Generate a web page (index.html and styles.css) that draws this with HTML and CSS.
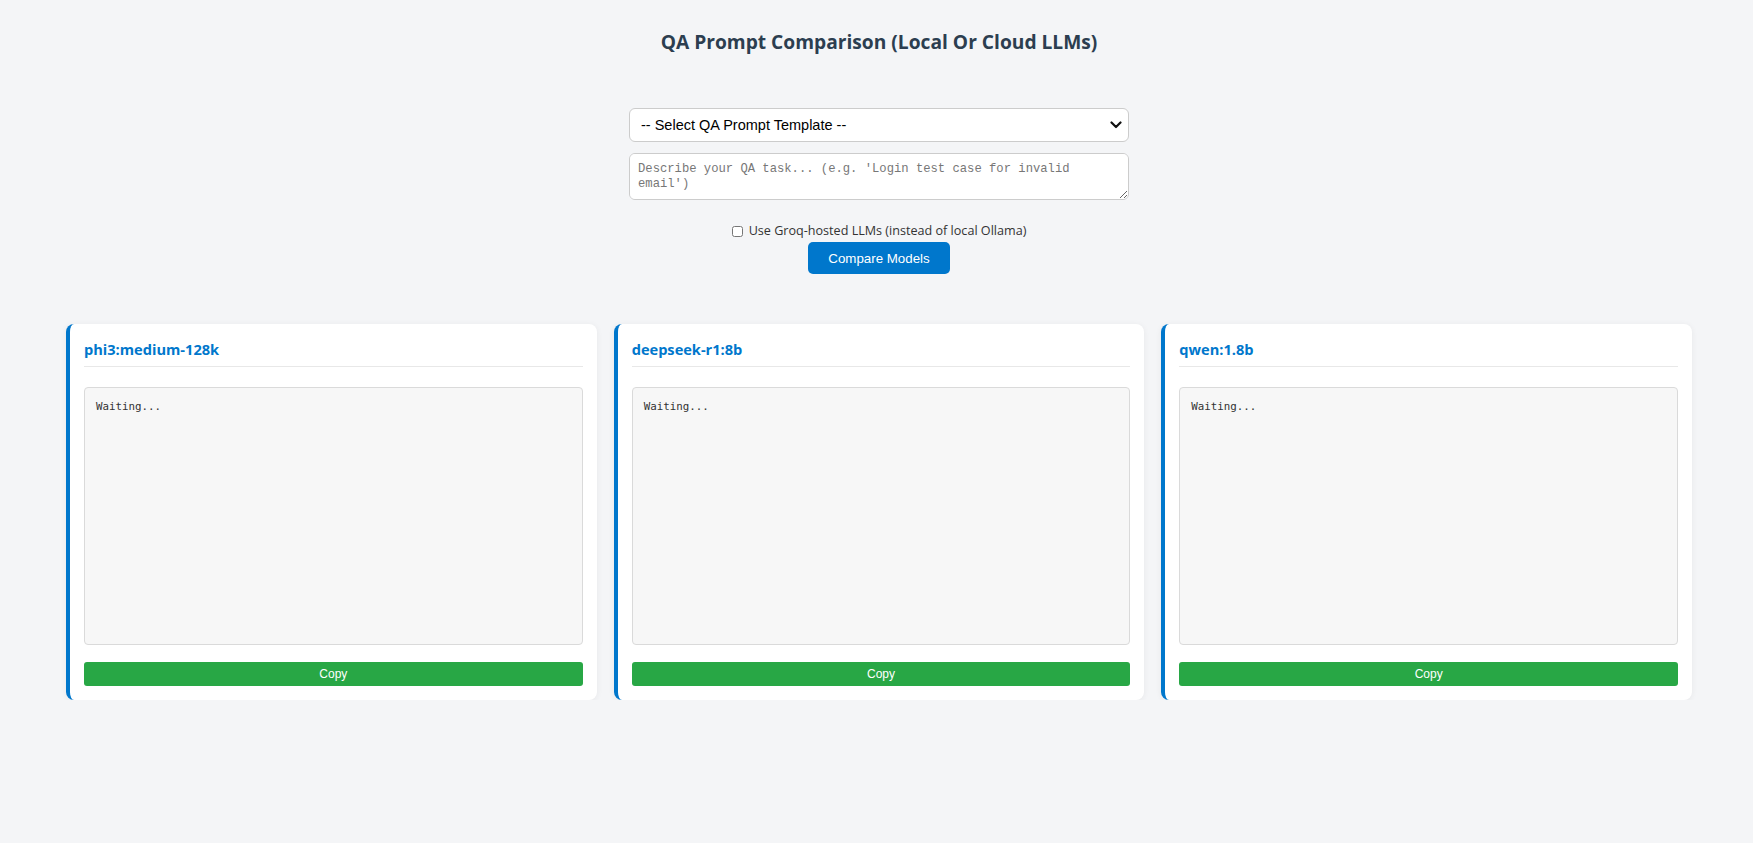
FILE: index.html
```html
<!DOCTYPE html>
<html lang="en">
<head>
<meta charset="utf-8">
<title>QA Prompt Comparison</title>
<link rel="stylesheet" href="styles.css">
</head>
<body>
  <h2 class="title">QA Prompt Comparison (Local Or Cloud LLMs)</h2>

  <div class="controls">
    <div class="select-wrap">
      <select class="template-select">
        <option>-- Select QA Prompt Template --</option>
      </select>
      <svg class="chevron" width="12" height="8" viewBox="0 0 12 8" aria-hidden="true">
        <path d="M1.5 1.5 L6 6 L10.5 1.5" fill="none" stroke="#111" stroke-width="2.2" stroke-linecap="round" stroke-linejoin="round"/>
      </svg>
    </div>
    <textarea class="task-input" rows="2" placeholder="Describe your QA task... (e.g. 'Login test case for invalid email')"></textarea>
    <label class="groq-toggle"><input type="checkbox" class="groq-check"> Use Groq-hosted LLMs (instead of local Ollama)</label>
    <button class="compare-btn">Compare Models</button>
  </div>

  <div class="results">
    <div class="card">
      <h3 class="card-title">phi3:medium-128k</h3>
      <pre class="output">Waiting...</pre>
      <button class="copy-btn">Copy</button>
    </div>
    <div class="card">
      <h3 class="card-title">deepseek-r1:8b</h3>
      <pre class="output">Waiting...</pre>
      <button class="copy-btn">Copy</button>
    </div>
    <div class="card">
      <h3 class="card-title">qwen:1.8b</h3>
      <pre class="output">Waiting...</pre>
      <button class="copy-btn">Copy</button>
    </div>
  </div>
</body>
</html>
```
FILE: styles.css
```css
html, body {
  margin: 0;
  background: #f4f5f7;
}

body {
  padding: 30px 61px 0 66px;
  font-family: "Open Sans", "Noto Sans", sans-serif;
  color: #333;
}

.title {
  margin: 0;
  text-align: center;
  font-size: 19.2px;
  line-height: 24px;
  font-weight: 700;
  color: #2c3e50;
}

.controls {
  display: flex;
  flex-direction: column;
  align-items: center;
  margin-top: 54px;
}

.select-wrap {
  position: relative;
  width: 500px;
}

.template-select {
  appearance: none;
  -webkit-appearance: none;
  display: block;
  width: 100%;
  height: 34px;
  box-sizing: border-box;
  padding: 0 30px 0 11px;
  border: 1px solid #ccc;
  border-radius: 6px;
  background: #fff;
  font-family: "Liberation Sans", Arial, sans-serif;
  font-size: 14.5px;
  color: #000;
}

.chevron {
  position: absolute;
  right: 7px;
  top: 13px;
  pointer-events: none;
}

.task-input {
  display: block;
  width: 500px;
  height: 47px;
  box-sizing: border-box;
  margin-top: 11px;
  padding: 8px;
  border: 1px solid #ccc;
  border-radius: 6px;
  background: #fff;
  font-family: "Liberation Mono", "DejaVu Sans Mono", monospace;
  font-size: 12.2px;
  line-height: 15px;
  color: #333;
}

.task-input::placeholder {
  color: #777;
}

.groq-toggle {
  display: flex;
  align-items: center;
  margin-top: 22px;
  font-size: 12.6px;
  line-height: 18px;
  color: #333;
}

.groq-check {
  width: 11px;
  height: 11px;
  margin: 0 6px 0 0;
}

.compare-btn {
  margin-top: 2px;
  padding: 0 20px;
  height: 32px;
  border: 0;
  border-radius: 5px;
  background: #0077cc;
  color: #fff;
  font-family: "Liberation Sans", Arial, sans-serif;
  font-size: 13.33px;
}

.results {
  display: grid;
  grid-template-columns: repeat(3, 1fr);
  gap: 17px;
  margin-top: 50px;
}

.card {
  display: flex;
  flex-direction: column;
  padding: 14px 14px 14px 14px;
  background: #fff;
  border-left: 4px solid #0077cc;
  border-radius: 8px;
  box-shadow: 0 1px 6px rgba(0, 0, 0, 0.06);
}

.card-title {
  margin: 0;
  padding-bottom: 6px;
  border-bottom: 1px solid #e8e8e8;
  font-size: 14.6px;
  line-height: 22px;
  font-weight: 700;
  color: #0077cc;
}

.output {
  margin: 20px 0 0 0;
  height: 258px;
  box-sizing: border-box;
  padding: 11px 11px;
  border: 1px solid #dadada;
  border-radius: 4px;
  background: #f7f7f7;
  font-family: "DejaVu Sans Mono", "Liberation Mono", monospace;
  font-size: 10.8px;
  line-height: 16px;
  color: #333;
  white-space: pre-wrap;
}

.copy-btn {
  margin-top: 17px;
  height: 24px;
  padding: 0;
  border: 0;
  border-radius: 3px;
  background: #28a745;
  color: #fff;
  font-family: "Liberation Sans", Arial, sans-serif;
  font-size: 12px;
}
```
